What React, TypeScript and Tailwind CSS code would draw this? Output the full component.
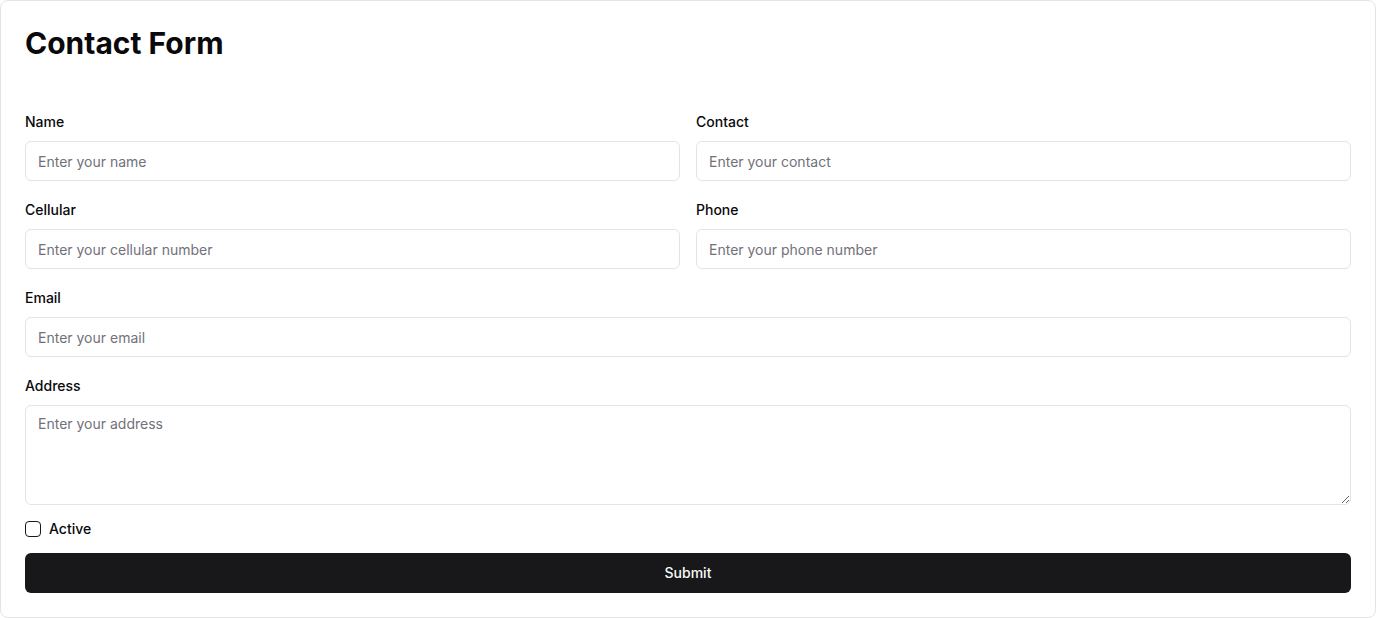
import { useState } from 'react'

type FieldProps = {
  id: string
  label: string
  placeholder: string
  type?: string
}

function Field({ id, label, placeholder, type = 'text' }: FieldProps) {
  return (
    <div className="flex flex-col">
      <label htmlFor={id} className="mb-[9px] block text-sm leading-5 font-medium text-[#09090b]">
        {label}
      </label>
      <input
        id={id}
        type={type}
        placeholder={placeholder}
        className="h-10 w-full rounded-md border border-[#e4e4e7] bg-white px-3 text-sm text-[#09090b] placeholder:text-[#71717a] outline-none"
      />
    </div>
  )
}

export default function App() {
  const [active, setActive] = useState(false)

  return (
    <div className="min-h-[618px] bg-white font-['Inter','Liberation_Sans',sans-serif]">
      <div className="rounded-lg border border-[#e4e4e7] bg-white p-6 text-[#09090b]">
        <h1 className="text-3xl leading-9 font-bold text-[#09090b]">Contact Form</h1>
        <form className="mt-[51px] flex flex-col" onSubmit={(e) => e.preventDefault()}>
          <div className="grid grid-cols-2 gap-x-4 gap-y-[19px]">
            <Field id="name" label="Name" placeholder="Enter your name" />
            <Field id="contact" label="Contact" placeholder="Enter your contact" />
            <Field id="cellular" label="Cellular" placeholder="Enter your cellular number" />
            <Field id="phone" label="Phone" placeholder="Enter your phone number" />
          </div>
          <div className="mt-[19px]">
            <Field id="email" label="Email" type="email" placeholder="Enter your email" />
          </div>
          <div className="mt-[19px] flex flex-col">
            <label htmlFor="address" className="mb-[9px] block text-sm leading-5 font-medium">
              Address
            </label>
            <textarea
              id="address"
              placeholder="Enter your address"
              className="block h-[100px] w-full rounded-md border border-[#e4e4e7] bg-white px-3 py-2 text-sm leading-5 placeholder:text-[#71717a] outline-none"
            />
          </div>
          <div className="mt-4 flex h-4 items-center gap-2">
            <button
              type="button"
              role="checkbox"
              aria-checked={active}
              onClick={() => setActive(!active)}
              className="h-4 w-4 shrink-0 rounded-[4px] border border-[#18181b] bg-white"
            />
            <span className="text-sm leading-none font-medium">Active</span>
          </div>
          <button
            type="submit"
            className="mt-4 h-10 w-full rounded-md bg-[#18181b] text-sm font-medium text-[#fafafa]"
          >
            Submit
          </button>
        </form>
      </div>
    </div>
  )
}
